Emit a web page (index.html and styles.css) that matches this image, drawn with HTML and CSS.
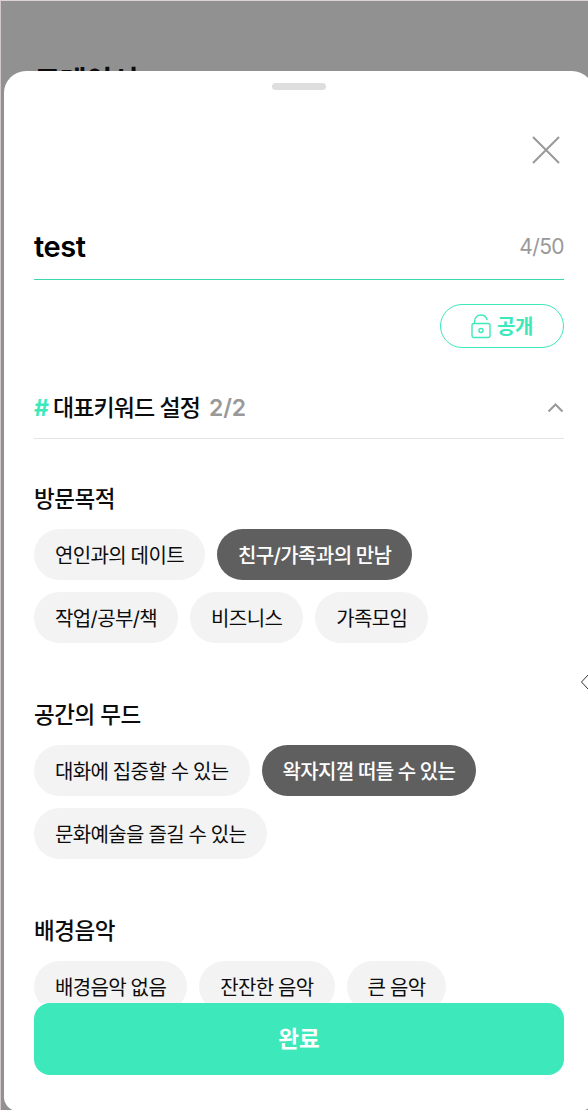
FILE: index.html
```html
<!DOCTYPE html>
<html lang="ko">
<head>
<meta charset="UTF-8">
<meta name="viewport" content="width=device-width, initial-scale=1.0">
<title>저장</title>
<link rel="stylesheet" href="styles.css">
</head>
<body>
<div class="page">
	<h1 class="page-title">트레이서</h1>
</div>

<div class="sheet">
	<div class="handle"></div>
	<button class="close" aria-label="닫기">
		<svg width="28" height="28" viewBox="0 0 28 28"><path d="M1 1L27 27M27 1L1 27" /></svg>
	</button>

	<div class="name-field">
		<span class="name">test</span>
		<span class="count">4/50</span>
	</div>

	<button class="open-button">
		<svg width="20" height="25" viewBox="0 0 20 25">
			<path d="M3.6 9.5V7C3.6 3.4 6.3 1 9.8 1C12.8 1 15.4 3 16.2 6.2" />
			<rect x="1" y="9.5" width="18" height="14" rx="2" />
			<circle cx="10" cy="16.5" r="2" />
		</svg>
		<span>공개</span>
	</button>

	<div class="keyword-title">
		<span class="hash">#</span>
		<span class="keyword-text">대표키워드 설정</span>
		<span class="keyword-count">2/2</span>
		<svg class="fold" width="17" height="10" viewBox="0 0 17 10"><path d="M1.5 8.5L8.5 1.5L15.5 8.5" /></svg>
	</div>

	<div class="group">
		<h2>방문목적</h2>
		<div class="chips">
			<button class="chip">연인과의 데이트</button>
			<button class="chip on">친구/가족과의 만남</button>
			<button class="chip">작업/공부/책</button>
			<button class="chip">비즈니스</button>
			<button class="chip">가족모임</button>
		</div>
	</div>

	<div class="group">
		<h2>공간의 무드</h2>
		<div class="chips">
			<button class="chip">대화에 집중할 수 있는</button>
			<button class="chip on">왁자지껄 떠들 수 있는</button>
			<button class="chip">문화예술을 즐길 수 있는</button>
		</div>
	</div>

	<div class="group">
		<h2>배경음악</h2>
		<div class="chips">
			<button class="chip">배경음악 없음</button>
			<button class="chip">잔잔한 음악</button>
			<button class="chip">큰 음악</button>
		</div>
	</div>

	<div class="bottom">
		<button class="done">완료</button>
	</div>
</div>

<!-- 오른쪽 가장자리 화살표 -->
<svg class="edge-arrow" width="8" height="16" viewBox="0 0 8 16"><path d="M8 1L1.5 8L8 15" /></svg>
</body>
</html>
```
FILE: styles.css
```css
* {
	box-sizing: border-box;
}
body {
	margin: 0;
	height: 1110px;
	overflow: hidden;
	position: relative;
	background: #919191;
	border-top: 1px solid #ddd3d8;
	border-left: 1px solid #d3c6cd;
	font-family: Inter, "Noto Sans CJK KR", sans-serif;
	color: #0c0c0c;
}
button {
	margin: 0;
	border: 0;
	font-family: inherit;
	color: inherit;
	cursor: pointer;
}
svg {
	fill: none;
	stroke: currentColor;
}
.page {
	height: 70px;
	padding: 64px 0 0 33px;
	overflow: hidden;
}
.page-title {
	margin: 0;
	font-size: 29px;
	line-height: 34px;
	font-weight: 700;
	letter-spacing: -0.8px;
}

/* 바텀시트 */
.sheet {
	width: 590px;
	height: 1040px;
	margin-left: 3px;
	padding: 12px 30px 0;
	background: #fff;
	border-radius: 22px 22px 14px 14px;
	overflow: hidden;
	display: flex;
	flex-direction: column;
}
.handle {
	width: 54px;
	height: 7px;
	flex: none;
	border-radius: 4px;
	background: #dedede;
	align-self: center;
}
.close {
	align-self: flex-end;
	width: 36px;
	height: 36px;
	margin-top: 42px;
	padding: 4px;
	background: none;
	color: #999;
}
.close svg {
	display: block;
	stroke-width: 2;
}
.name-field {
	height: 64px;
	margin-top: 48px;
	padding-bottom: 2px;
	border-bottom: 1px solid #3cd6b0;
	display: flex;
	align-items: center;
	justify-content: space-between;
}
.name {
	font-size: 29px;
	font-weight: 600;
	letter-spacing: -0.4px;
	color: #000;
}
.count {
	font-size: 21px;
	letter-spacing: -0.6px;
	color: #999;
}
.open-button {
	align-self: flex-end;
	width: 124px;
	height: 44px;
	margin-top: 24px;
	padding: 0 0 1px;
	border: 1px solid #3de8bb;
	border-radius: 22px;
	background: #fff;
	color: #3de8bb;
	font-size: 20px;
	font-weight: 700;
	letter-spacing: -0.5px;
	display: flex;
	align-items: center;
	justify-content: center;
	gap: 6px;
}
.open-button svg {
	margin-top: 1px;
	stroke-width: 1.4;
}
.keyword-title {
	height: 61px;
	margin-top: 30px;
	border-bottom: 1px solid #e4e4e4;
	display: flex;
	align-items: center;
	font-size: 23px;
	font-weight: 500;
}
.hash {
	color: #3de8bb;
	font-weight: 700;
	margin-right: 4px;
}
.keyword-text {
	padding-bottom: 5px;
	letter-spacing: -0.9px;
}
.keyword-count {
	margin-left: 9px;
	color: #999;
	font-weight: 600;
	letter-spacing: -0.2px;
}
.fold {
	margin-left: auto;
	color: #999;
	stroke-width: 2;
}

.group {
	margin-top: 44px;
	margin-bottom: 12px;
}
.group h2 {
	margin: 0 0 14px;
	font-size: 22.5px;
	line-height: 32px;
	font-weight: 500;
	letter-spacing: -0.45px;
}
.chips {
	display: flex;
	flex-wrap: wrap;
	gap: 12px;
}
.chip {
	height: 51px;
	padding: 0 21px 1px;
	border-radius: 26px;
	background: #f3f3f3;
	font-size: 20px;
	letter-spacing: -0.62px;
	word-spacing: -0.5px;
	white-space: nowrap;
}
.chip.on {
	background: #5f5f5f;
	color: #fff;
	font-weight: 500;
}

/* 하단 버튼 */
.bottom {
	position: absolute;
	left: 33px;
	top: 1002px;
	width: 530px;
	height: 108px;
	background: #fff;
}
.done {
	width: 100%;
	height: 72px;
	padding: 0 0 4px;
	border-radius: 16px;
	background: #3de8bb;
	color: #fff;
	font-size: 22.5px;
	font-weight: 700;
}
.edge-arrow {
	position: absolute;
	right: 0;
	top: 673px;
	color: #333;
}
```
